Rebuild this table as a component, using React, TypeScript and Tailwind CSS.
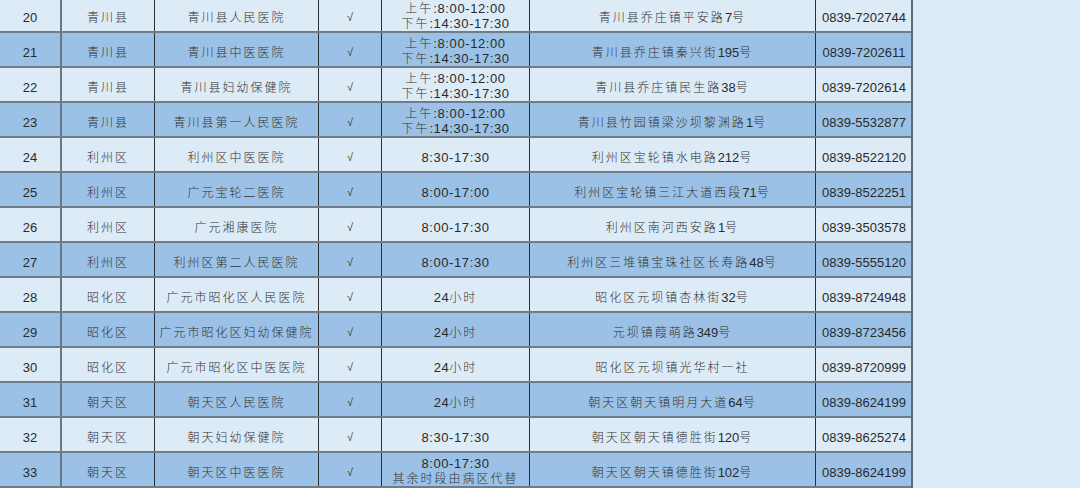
import React from "react";

type Row = {
  n: number;
  county: string;
  hosp: string;
  hours: string[];
  addr: string;
  phone: string;
};

const AM = ["上午:8:00-12:00", "下午:14:30-17:30"];

const rows: Row[] = [
  { n: 20, county: "青川县", hosp: "青川县人民医院", hours: AM, addr: "青川县乔庄镇平安路7号", phone: "0839-7202744" },
  { n: 21, county: "青川县", hosp: "青川县中医医院", hours: AM, addr: "青川县乔庄镇秦兴街195号", phone: "0839-7202611" },
  { n: 22, county: "青川县", hosp: "青川县妇幼保健院", hours: AM, addr: "青川县乔庄镇民生路38号", phone: "0839-7202614" },
  { n: 23, county: "青川县", hosp: "青川县第一人民医院", hours: AM, addr: "青川县竹园镇梁沙坝黎渊路1号", phone: "0839-5532877" },
  { n: 24, county: "利州区", hosp: "利州区中医医院", hours: ["8:30-17:30"], addr: "利州区宝轮镇水电路212号", phone: "0839-8522120" },
  { n: 25, county: "利州区", hosp: "广元宝轮二医院", hours: ["8:00-17:00"], addr: "利州区宝轮镇三江大道西段71号", phone: "0839-8522251" },
  { n: 26, county: "利州区", hosp: "广元湘康医院", hours: ["8:00-17:30"], addr: "利州区南河西安路1号", phone: "0839-3503578" },
  { n: 27, county: "利州区", hosp: "利州区第二人民医院", hours: ["8:00-17:30"], addr: "利州区三堆镇宝珠社区长寿路48号", phone: "0839-5555120" },
  { n: 28, county: "昭化区", hosp: "广元市昭化区人民医院", hours: ["24小时"], addr: "昭化区元坝镇杏林街32号", phone: "0839-8724948" },
  { n: 29, county: "昭化区", hosp: "广元市昭化区妇幼保健院", hours: ["24小时"], addr: "元坝镇葭萌路349号", phone: "0839-8723456" },
  { n: 30, county: "昭化区", hosp: "广元市昭化区中医医院", hours: ["24小时"], addr: "昭化区元坝镇光华村一社", phone: "0839-8720999" },
  { n: 31, county: "朝天区", hosp: "朝天区人民医院", hours: ["24小时"], addr: "朝天区朝天镇明月大道64号", phone: "0839-8624199" },
  { n: 32, county: "朝天区", hosp: "朝天妇幼保健院", hours: ["8:30-17:30"], addr: "朝天区朝天镇德胜街120号", phone: "0839-8625274" },
  { n: 33, county: "朝天区", hosp: "朝天区中医医院", hours: ["8:00-17:30", "其余时段由病区代替"], addr: "朝天区朝天镇德胜街102号", phone: "0839-8624199" },
];

const isCJK = (c: string) => /[\u3000-\u9fff\uff00-\uffef]/.test(c);

function Mixed({ text, wide }: { text: string; wide?: boolean }) {
  const parts: { cjk: boolean; s: string }[] = [];
  for (const ch of text) {
    const c = isCJK(ch);
    const last = parts[parts.length - 1];
    if (last && last.cjk === c) last.s += ch;
    else parts.push({ cjk: c, s: ch });
  }
  return (
    <div className="flex shrink-0 items-center justify-center whitespace-nowrap leading-none h-[15px]">
      {parts.map((p, i) =>
        p.cjk ? (
          <span key={i} className="tracking-[2px] text-[12px] leading-none font-light text-[#333]">
            {p.s}
          </span>
        ) : (
          <span
            key={i}
            className={`text-[13px] leading-none text-[#2a2a2a] ${wide ? "tracking-[0.6px]" : ""}`}
          >
            {p.s}
          </span>
        )
      )}
    </div>
  );
}

const cell = "flex flex-col items-center justify-center text-center overflow-hidden";

export default function App() {
  return (
    <div
      className="w-[1080px] h-[488px] overflow-hidden bg-[#ddebf7]"
      style={{ fontFamily: '"Liberation Sans", "Noto Sans CJK SC", sans-serif' }}
    >
      <div className="-mt-[2px] w-[913px] border-r-2 border-[#5d6a78]">
        {rows.map((r, i) => (
          <div
            key={r.n}
            className={`grid grid-cols-[62px_93px_164px_63px_148px_286px_96px] h-[35px] border-b-2 border-[#6f7d8b] ${
              i % 2 === 0 ? "bg-[#ddebf7]" : "bg-[#9bc2e6]"
            }`}
          >
            <div className={`${cell} pt-[6px] border-r-2 border-[#6a7684] text-[13px] leading-none text-[#2a2a2a]`}>{r.n}</div>
            <div className={`${cell} pt-[6px] border-r border-[#2a2f36]`}>
              <Mixed text={r.county} />
            </div>
            <div className={`${cell} pt-[6px] border-r border-[#2a2f36]`}>
              <Mixed text={r.hosp} />
            </div>
            <div className={`${cell} pt-[6px] border-r border-[#2a2f36] text-[11px] leading-none text-[#333]`}>√</div>
            <div className={`${cell} ${r.hours.length > 1 ? "pt-[3px]" : "pt-[6px]"} border-r border-[#2a2f36]`}>
              {r.hours.map((h, k) => (
                <Mixed key={k} text={h} wide />
              ))}
            </div>
            <div className={`${cell} pt-[6px] border-r border-[#2a2f36]`}>
              <Mixed text={r.addr} />
            </div>
            <div className={`${cell} pt-[6px] text-[13px] leading-none text-[#2a2a2a]`}>{r.phone}</div>
          </div>
        ))}
      </div>
    </div>
  );
}
